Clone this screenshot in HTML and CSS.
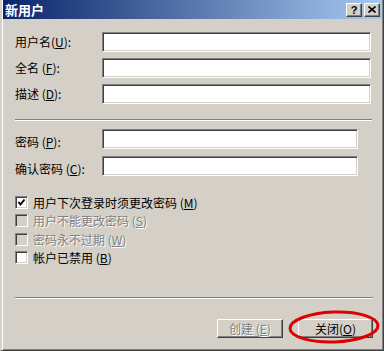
FILE: index.html
```html
<!DOCTYPE html>
<html>

<head>
    <title>新用户</title>
    <link rel="stylesheet" href="styles.css">
</head>

<body>
    <div class="window">
        <div class="titlebar">
            <span class="title">新用户</span>
            <div class="title-buttons">
                <span class="tbtn help">?</span>
                <span class="tbtn">
                    <svg width="8" height="7" viewBox="0 0 8 7">
                        <path d="M0.5 0.5 L7.5 6.5 M7.5 0.5 L0.5 6.5" stroke="#000" stroke-width="1.6" fill="none" />
                    </svg>
                </span>
            </div>
        </div>

        <div class="content">
            <div class="form-group">
                <div class="form-row">
                    <label for="user-name">用户名(<u>U</u>):</label>
                    <input class="text-input" type="text" id="user-name">
                </div>
                <div class="form-row">
                    <label for="full-name">全名 (<u>F</u>):</label>
                    <input class="text-input" type="text" id="full-name">
                </div>
                <div class="form-row">
                    <label for="desc">描述 (<u>D</u>):</label>
                    <input class="text-input" type="text" id="desc">
                </div>
            </div>

            <div class="separator"></div>

            <div class="form-group password-group">
                <div class="form-row low">
                    <label for="password">密码 (<u>P</u>):</label>
                    <input class="text-input short" type="password" id="password">
                </div>
                <div class="form-row low">
                    <label for="confirm">确认密码 (<u>C</u>):</label>
                    <input class="text-input short" type="password" id="confirm">
                </div>
            </div>

            <div class="checks">
                <div class="check-row">
                    <span class="box">
                        <svg width="11" height="11" viewBox="0 0 11 11">
                            <polyline points="2.5,5 4.5,7.5 8.5,2.5" stroke="#000" stroke-width="2" fill="none" />
                        </svg>
                    </span>
                    <span>用户下次登录时须更改密码 (<u>M</u>)</span>
                </div>
                <div class="check-row disabled">
                    <span class="box off"></span>
                    <span>用户不能更改密码 (<u>S</u>)</span>
                </div>
                <div class="check-row disabled">
                    <span class="box off"></span>
                    <span>密码永不过期 (<u>W</u>)</span>
                </div>
                <div class="check-row">
                    <span class="box"></span>
                    <span>帐户已禁用 (<u>B</u>)</span>
                </div>
            </div>

            <div class="separator wide"></div>

            <div class="buttons">
                <button class="btn btn-create disabled" disabled>创建 (<u>E</u>)</button>
                <button class="btn btn-close">关闭(<u>O</u>)</button>
            </div>
        </div>

        <!-- red mark drawn over the close button -->
        <svg class="highlight" width="94" height="36" viewBox="0 0 94 36">
            <ellipse cx="47" cy="18" rx="44" ry="15" transform="rotate(-2 47 18)" stroke="#e00000" stroke-width="3" fill="none" />
        </svg>
    </div>
</body>

</html>
```

FILE: styles.css
```css
body {
    margin: 0;
    background-color: #d4d0c8;
    font-family: "Noto Sans CJK SC", "Liberation Sans", sans-serif;
    font-size: 12px;
    color: #000;
}

.window {
    position: relative;
    box-sizing: border-box;
    width: 384px;
    height: 351px;
    background-color: #d4d0c8;
    border-left: 2px solid #d4d0c8;
    border-right: 1px solid #404040;
    border-bottom: 1px solid #404040;
    padding: 0 1px 1px 1px;
    box-shadow: inset 1px 0 #fff, inset -1px -1px #808080;
}

.titlebar {
    display: flex;
    align-items: center;
    justify-content: space-between;
    height: 19px;
    padding: 0 2px;
    background: linear-gradient(to right, #0a246a, #a6caf0);
}

.title {
    color: #fff;
    font-weight: bold;
    font-size: 13px;
    line-height: 19px;
}

.title-buttons {
    display: flex;
    gap: 2px;
}

.tbtn {
    display: flex;
    align-items: center;
    justify-content: center;
    box-sizing: border-box;
    width: 16px;
    height: 14px;
    background-color: #d4d0c8;
    border: 1px solid;
    border-color: #fff #404040 #404040 #fff;
    box-shadow: inset -1px -1px #808080;
}

.help {
    font-family: "Liberation Sans", sans-serif;
    font-weight: bold;
    font-size: 11px;
    line-height: 12px;
}

.content {
    padding: 13px 0 0 12px;
}

.form-row {
    display: flex;
    align-items: center;
    height: 20px;
}

.form-row + .form-row {
    margin-top: 6px;
}

.form-row label {
    width: 87px;
    line-height: 14px;
}

/* password labels sit lower than their boxes */
.form-row.low {
    align-items: flex-end;
}

.form-row.low + .form-row.low {
    margin-top: 7px;
}

.text-input {
    box-sizing: border-box;
    width: 269px;
    height: 20px;
    margin: 0;
    padding: 0 3px;
    background-color: #fff;
    border: 1px solid;
    border-color: #808080 #fff #fff #808080;
    box-shadow: inset 1px 1px #404040, inset -1px -1px #d4d0c8;
    outline: none;
}

.text-input.short {
    width: 256px;
}

.separator {
    width: 357px;
    height: 0;
    margin-top: 15px;
    border-top: 1px solid #808080;
    border-bottom: 1px solid #fff;
}

.password-group {
    margin-top: 8px;
}

.checks {
    margin-top: 17px;
}

.check-row {
    display: flex;
    align-items: center;
    gap: 5px;
    height: 18.5px;
}

.box {
    display: flex;
    align-items: center;
    justify-content: center;
    box-sizing: border-box;
    width: 13px;
    height: 13px;
    background-color: #fff;
    border: 1px solid;
    border-color: #808080 #fff #fff #808080;
    box-shadow: inset 1px 1px #404040, inset -1px -1px #d4d0c8;
}

.box.off {
    background-color: #d4d0c8;
}

.disabled {
    color: #808080;
    text-shadow: 1px 1px #fff;
}

.separator.wide {
    width: 358px;
    margin-top: 30px;
}

.buttons {
    display: flex;
    justify-content: flex-end;
    gap: 15px;
    margin-top: 20px;
    padding-right: 9px;
}

.btn {
    display: flex;
    align-items: center;
    justify-content: center;
    box-sizing: border-box;
    height: 19px;
    padding: 0;
    font: inherit;
    color: #000;
    background-color: #d4d0c8;
    border: 1px solid;
    border-color: #fff #404040 #404040 #fff;
    box-shadow: inset -1px -1px #808080;
}

.btn.disabled {
    color: #808080;
}

.btn-create {
    width: 66px;
}

.btn-close {
    width: 75px;
}

.highlight {
    position: absolute;
    left: 285px;
    top: 309px;
}
```
